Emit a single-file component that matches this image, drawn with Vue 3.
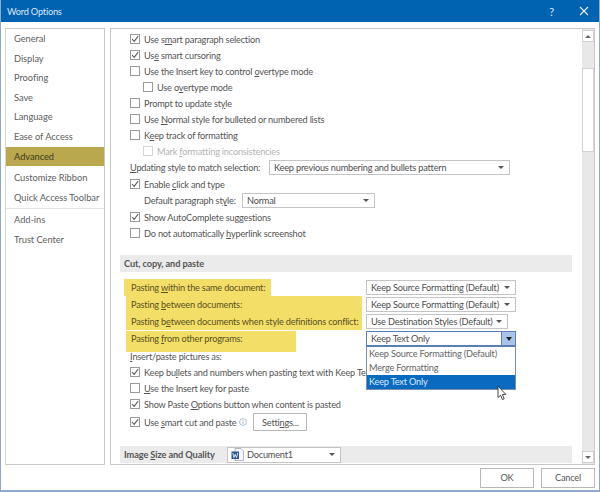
<script setup>
const navTop = ['General', 'Display', 'Proofing', 'Save', 'Language', 'Ease of Access']
const navMid = ['Customize Ribbon', 'Quick Access Toolbar']
const navEnd = ['Add-ins', 'Trust Center']
const dropdownItems = ['Keep Source Formatting (Default)', 'Merge Formatting', 'Keep Text Only']
</script>

<template>
  <div class="window">
    <header class="titlebar">
      <span class="title">Word Options</span>
      <span class="help">?</span>
      <svg class="close" width="12" height="12" viewBox="0 0 12 12">
        <path d="M2 2 L10 10 M10 2 L2 10" stroke="#e6f0fa" stroke-width="1.1" fill="none" />
      </svg>
    </header>

    <div class="body">
      <nav class="sidebar">
        <div v-for="n in navTop" :key="n" class="nav-item">{{ n }}</div>
        <div class="nav-item active">Advanced</div>
        <div class="nav-group">
          <div v-for="n in navMid" :key="n" class="nav-item">{{ n }}</div>
        </div>
        <div class="nav-group sep">
          <div v-for="n in navEnd" :key="n" class="nav-item">{{ n }}</div>
        </div>
      </nav>

      <main class="panel">
        <div class="content">
          <div class="row check"><span class="box"><svg viewBox="0 0 10 10"><path d="M2 5 L4.2 7.4 L8.2 2" /></svg></span><span>Use s<u>m</u>art paragraph selection</span></div>
          <div class="row check"><span class="box"><svg viewBox="0 0 10 10"><path d="M2 5 L4.2 7.4 L8.2 2" /></svg></span><span>Us<u>e</u> smart cursoring</span></div>
          <div class="row check"><span class="box"></span><span>Use the Insert key to control <u>o</u>vertype mode</span></div>
          <div class="row check sub"><span class="box"></span><span>Use o<u>v</u>ertype mode</span></div>
          <div class="row check"><span class="box"></span><span>Prompt to update st<u>y</u>le</span></div>
          <div class="row check"><span class="box"></span><span>Use <u>N</u>ormal style for bulleted or numbered lists</span></div>
          <div class="row check"><span class="box"></span><span>K<u>e</u>ep track of formatting</span></div>
          <div class="row check sub disabled"><span class="box"></span><span>Mark <u>f</u>ormatting inconsistencies</span></div>

          <div class="row select-row">
            <span class="update-label"><u>U</u>pdating style to match selection:</span>
            <div class="select w-update"><span>Keep previous numbering and bullets pattern</span><i class="arrow"></i></div>
          </div>
          <div class="row check"><span class="box"><svg viewBox="0 0 10 10"><path d="M2 5 L4.2 7.4 L8.2 2" /></svg></span><span>Enable <u>c</u>lick and type</span></div>
          <div class="row select-row sub-label">
            <span class="default-label">Default paragraph st<u>y</u>le:</span>
            <div class="select w-normal"><span>Normal</span><i class="arrow"></i></div>
          </div>
          <div class="row check"><span class="box"><svg viewBox="0 0 10 10"><path d="M2 5 L4.2 7.4 L8.2 2" /></svg></span><span>Show AutoComplete suggestions</span></div>
          <div class="row check"><span class="box"></span><span>Do not automatically <u>h</u>yperlink screenshot</span></div>

          <h3 class="section cut">Cut, copy, and paste</h3>

          <div class="paste-row">
            <span class="mark one">Pasting <u>w</u>ithin the same document:</span>
            <div class="select w-paste"><span>Keep Source Formatting (Default)</span><i class="arrow"></i></div>
          </div>
          <div class="paste-row">
            <span class="mark two">Pasting <u>b</u>etween documents:</span>
            <div class="select w-paste"><span>Keep Source Formatting (Default)</span><i class="arrow"></i></div>
          </div>
          <div class="paste-row">
            <span class="mark two">Pasting b<u>e</u>tween documents when style definitions conflict:</span>
            <div class="select w-dest"><span>Use Destination Styles (Default)</span><i class="arrow"></i></div>
          </div>
          <div class="paste-row">
            <span class="mark three">Pasting <u>f</u>rom other programs:</span>
            <div class="select w-paste open">
              <span>Keep Text Only</span>
              <i class="arrow-btn"><i class="arrow dark"></i></i>
              <ul class="dropdown">
                <li v-for="(d, i) in dropdownItems" :key="d" :class="{ picked: i === 2 }">{{ d }}</li>
              </ul>
              <svg class="cursor" width="11" height="16" viewBox="0 0 11 16">
                <path d="M1 1 L1 12.5 L3.6 10.2 L5.4 14.6 L7.2 13.8 L5.4 9.6 L8.8 9.4 Z" fill="#fff" stroke="#333" stroke-width="0.9" />
              </svg>
            </div>
          </div>
          <div class="row plain-row"><u>I</u>nsert/paste pictures as:</div>
          <div class="row check clipped"><span class="box"><svg viewBox="0 0 10 10"><path d="M2 5 L4.2 7.4 L8.2 2" /></svg></span><span>Keep bu<u>l</u>lets and numbers when pasting text with Keep Text Only</span></div>
          <div class="row check"><span class="box"></span><span><u>U</u>se the Insert key for paste</span></div>
          <div class="row check"><span class="box"><svg viewBox="0 0 10 10"><path d="M2 5 L4.2 7.4 L8.2 2" /></svg></span><span>Show Paste <u>O</u>ptions button when content is pasted</span></div>
          <div class="row check settings-row">
            <span class="box"><svg viewBox="0 0 10 10"><path d="M2 5 L4.2 7.4 L8.2 2" /></svg></span>
            <span>Use <u>s</u>mart cut and paste</span>
            <svg class="info" width="8" height="8" viewBox="0 0 8 8">
              <circle cx="4" cy="4" r="3.4" fill="none" stroke="#8aa5c4" stroke-width="0.7" />
              <path d="M4 3.4 V6 M4 1.8 V2.6" stroke="#8aa5c4" stroke-width="0.8" />
            </svg>
            <button class="btn settings">Setti<u>n</u>gs...</button>
          </div>

          <div class="section image">
            <span class="image-title">Image <u>S</u>ize and Quality</span>
            <div class="select w-doc">
              <svg class="doc" width="13" height="13" viewBox="0 0 13 13">
                <path d="M4 .5 H10 L12.5 3 V12.5 H4 Z" fill="#f6f8fb" stroke="#8c9bb0" stroke-width="0.7" />
                <rect x="0.5" y="3.5" width="7.5" height="7.5" fill="#2b5797" />
                <path d="M1.8 5 L2.9 9.5 L4.2 6.4 L5.5 9.5 L6.7 5" stroke="#fff" stroke-width="0.8" fill="none" />
              </svg>
              <span>Document1</span><i class="arrow"></i>
            </div>
          </div>
        </div>

        <div class="scrollbar">
          <div class="sb-btn"><i class="tri up"></i></div>
          <div class="sb-track"><div class="sb-thumb"></div></div>
          <div class="sb-btn"><i class="tri down"></i></div>
        </div>
      </main>
    </div>

    <footer class="footer">
      <button class="btn action">OK</button>
      <button class="btn action">Cancel</button>
    </footer>
  </div>
</template>

<style>
html, body { margin: 0; background: #fff; }
</style>

<style scoped>
.window {
  box-sizing: border-box;
  width: 600px;
  height: 492px;
  display: flex;
  flex-direction: column;
  background: #fff;
  border: 1px solid #8fa9cf;
  border-top: 0;
  border-bottom-width: 2px;
  font-family: Lato, "Noto Sans", sans-serif;
  font-size: 9.2px;
  letter-spacing: -0.2px;
  color: #555;
  overflow: hidden;
}

u { text-underline-offset: 1px; }

.titlebar {
  height: 22px;
  flex: none;
  margin: 0 -1px;
  padding: 0 10px 0 7px;
  background: #0063b1;
  color: #dbe9f6;
  display: flex;
  align-items: center;
}
.title { flex: 1; }
.help { margin-right: 24px; font-size: 11px; }

.body {
  flex: 1;
  min-height: 0;
  display: flex;
  gap: 5px;
  padding: 6px 4px 0 4px;
}

.sidebar {
  box-sizing: border-box;
  width: 100px;
  flex: none;
  border: 1px solid #c8c8c8;
  border-left-color: #d4d4d4;
  color: #5e5e5e;
  font-size: 9.3px;
  letter-spacing: -0.05px;
}
.nav-item {
  height: 19.6px;
  line-height: 19.6px;
  padding-left: 8px;
  white-space: nowrap;
}
.nav-item.active {
  background: #b9a84e;
  color: #3d3a20;
}
.nav-group { margin-top: 2px; }
.nav-group.sep {
  margin-top: 1px;
  padding-top: 1px;
  border-top: 1px solid #e4e4e4;
}

.panel {
  flex: 1;
  min-width: 0;
  display: flex;
  box-sizing: border-box;
  border: 1px solid #c8c8c8;
}

.content {
  flex: 1;
  min-width: 0;
  padding: 2px 10px 0 9px;
  overflow: hidden;
}

.row {
  height: 16px;
  display: flex;
  align-items: center;
  white-space: nowrap;
  padding-left: 10px;
}
.check { gap: 4px; }
.sub { padding-left: 23px; }
.disabled { color: #b4b4b4; }
.disabled .box { border-color: #d6d6d6; }

.box {
  box-sizing: border-box;
  width: 10px;
  height: 10px;
  flex: none;
  border: 1px solid #9a9a9a;
  background: #fff;
  display: block;
}
.box svg {
  display: block;
  width: 10px;
  height: 10px;
  margin: -1px;
}
.box path {
  fill: none;
  stroke: #555;
  stroke-width: 1.1;
}

.select {
  position: relative;
  box-sizing: border-box;
  height: 15px;
  display: flex;
  align-items: center;
  border: 1px solid #c4c4c4;
  background: #fff;
  padding-left: 4px;
  color: #4e4e4e;
  flex: none;
}
.select > span { flex: 1; white-space: nowrap; overflow: hidden; }
.arrow {
  width: 0;
  height: 0;
  margin: 0 5px 0 4px;
  flex: none;
  border-left: 3px solid transparent;
  border-right: 3px solid transparent;
  border-top: 3px solid #555;
}

.select-row { height: 17px; }
.update-label { width: 139px; flex: none; }
.w-update { width: 241px; }
.sub-label { padding-left: 24px; }
.default-label { width: 98px; flex: none; }
.w-normal { width: 133px; }
.w-paste { width: 150px; }
.w-dest { width: 142px; }
.w-dest .arrow { margin-left: 0; }
.w-doc { width: 114px; font-weight: 400; letter-spacing: -0.2px; padding-left: 3px; gap: 3px; height: 16px; }
.doc { flex: none; }

.section {
  margin: 0;
  font-size: 9.2px;
  letter-spacing: -0.1px;
  font-weight: 700;
  background: #ebebeb;
  color: #555;
  height: 17px;
  line-height: 17px;
  padding-left: 4px;
}
.cut { margin: 14px 0 7px; }
.image {
  margin-top: 14px;
  display: flex;
  align-items: center;
  height: 17px;
}
.image-title { width: 103px; flex: none; }

.paste-row {
  height: 17px;
  display: grid;
  grid-template-columns: 246px auto;
  grid-template-rows: 17px;
  justify-content: start;
  align-items: center;
  white-space: nowrap;
}
.mark {
  box-sizing: border-box;
  height: 17px;
  line-height: 17px;
  background: #f3de68;
  color: #5a5320;
  justify-self: start;
}
.mark.one { width: 147px; margin-left: 4px; padding-left: 7px; }
.mark.two { width: 236px; margin-left: 6px; padding-left: 5px; }
.mark.three {
  width: 170px;
  height: 21px;
  line-height: 16px;
  align-self: start;
  margin: 1px 0 0 6px;
  padding-left: 5px;
}

.open {
  border-color: #5b7fb5;
  padding-right: 0;
}
.arrow-btn {
  align-self: stretch;
  width: 13px;
  background: #a9c3ea;
  border-left: 1px solid #5b7fb5;
  display: flex;
  align-items: center;
  justify-content: center;
}
.arrow-btn .arrow { margin: 0; border-left-width: 3.5px; border-right-width: 3.5px; border-top: 4px solid #222; }

.dropdown {
  position: absolute;
  z-index: 5;
  top: 14px;
  left: -1px;
  right: -1px;
  margin: 0;
  padding: 0;
  list-style: none;
  background: #fff;
  border: 1px solid #7d8ea8;
  border-top-color: #5b7fb5;
}
.dropdown li {
  height: 14px;
  line-height: 14px;
  padding-left: 2px;
  color: #666;
}
.dropdown li.picked { background: #0a6ac0; color: #d8e8f8; }
.cursor {
  position: absolute;
  z-index: 6;
  left: 130px;
  top: 53px;
}

.plain-row { margin-top: 1px; }
.clipped { width: 236px; overflow: hidden; }
.settings-row { height: 20px; }
.info { margin-left: -1px; flex: none; }
.btn {
  box-sizing: border-box;
  background: #fff;
  border: 1px solid #b8b8b8;
  font-family: inherit;
  font-size: 9.2px;
  letter-spacing: inherit;
  color: #555;
  padding: 0;
}
.settings { width: 54px; height: 18px; margin-left: 2px; }

.scrollbar {
  width: 12px;
  flex: none;
  display: flex;
  flex-direction: column;
  background: #e8e8e8;
  padding: 1px 0 1px;
}
.sb-btn {
  height: 10px;
  flex: none;
  background: #fff;
  border: 1px solid #d0d0d0;
  display: flex;
  align-items: center;
  justify-content: center;
}
.tri {
  width: 0;
  height: 0;
  border-left: 3px solid transparent;
  border-right: 3px solid transparent;
}
.tri.up { border-bottom: 3px solid #666; }
.tri.down { border-top: 3px solid #666; }
.sb-track { flex: 1; padding-top: 26px; }
.sb-thumb {
  box-sizing: border-box;
  height: 84px;
  background: #fff;
  border: 1px solid #d4d4d4;
}

.footer {
  height: 25px;
  flex: none;
  display: flex;
  justify-content: flex-end;
  align-items: center;
  gap: 7px;
  padding-right: 4px;
}
.action { width: 54px; height: 20px; }
</style>
